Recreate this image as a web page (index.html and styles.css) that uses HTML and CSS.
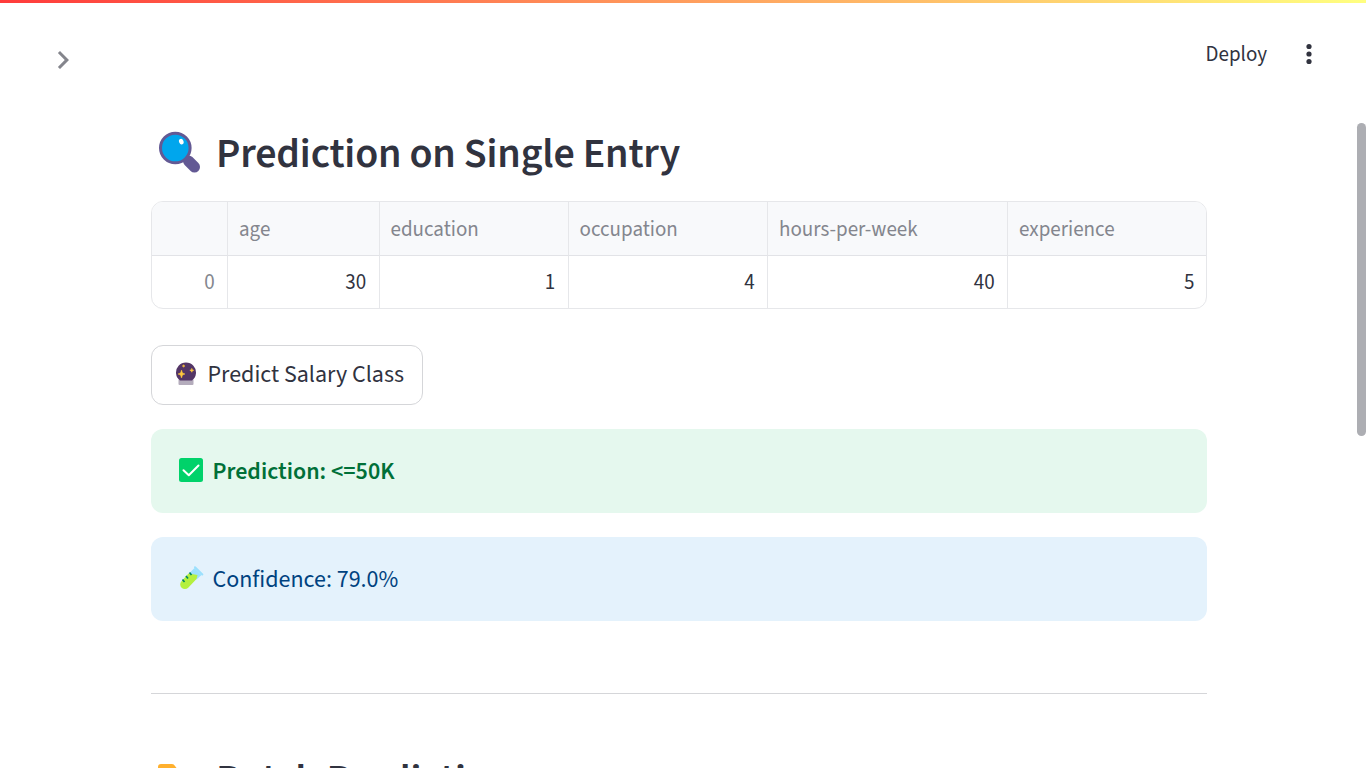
FILE: index.html
```html
<!DOCTYPE html>
<html lang="en">
<head>
<meta charset="utf-8">
<title>Salary Prediction</title>
<link rel="stylesheet" href="styles.css">
</head>
<body>
<div class="decoration"></div>
<header class="toolbar">
  <button class="expand" aria-label="Open sidebar"><svg width="36" height="36" viewBox="0 0 24 24"><path d="M10 6 8.59 7.41 13.17 12l-4.58 4.59L10 18l6-6z"/></svg></button>
  <div class="actions">
    <span class="deploy">Deploy</span>
    <svg class="kebab" width="30" height="30" viewBox="0 0 30 30"><circle cx="15" cy="7.5" r="2.6"/><circle cx="15" cy="15" r="2.6"/><circle cx="15" cy="22.5" r="2.6"/></svg>
  </div>
</header>
<main class="content">
  <h2 class="heading">
    <svg class="heading-icon" width="43" height="43" viewBox="0 0 43 43"><path d="M30.500 30l6 6" stroke="#635994" stroke-width="11" stroke-linecap="round"/><path d="M25 25l5 5" stroke="#635994" stroke-width="4"/><circle cx="17.300" cy="17" r="14.800" fill="#00a6ed" stroke="#635994" stroke-width="3"/><ellipse cx="23.300" cy="10.600" rx="2.200" ry="2.900" fill="#fff" transform="rotate(-22 23.300 10.600)"/></svg>
    <span class="title">Prediction on Single Entry</span>
  </h2>
  <div class="table">
    <div class="cell head"></div><div class="cell head">age</div><div class="cell head">education</div><div class="cell head">occupation</div><div class="cell head">hours-per-week</div><div class="cell head">experience</div>
    <div class="cell num index">0</div><div class="cell num">30</div><div class="cell num">1</div><div class="cell num">4</div><div class="cell num">40</div><div class="cell num">5</div>
  </div>
  <button class="predict">
    <svg width="24" height="24" viewBox="0 0 24 24"><path d="M4.500 17.500h15V22a1 1 0 0 1-1 1h-13a1 1 0 0 1-1-1z" fill="#b4acbc"/><path d="M6 18.600A10 10 0 1 1 18 18.600z" fill="#533566"/><path d="M7.500 8l1 3 2.500 1-2.500 1-1 3-1-3-2.500-1 2.500-1zM17.800 6.300l.6 1.400 1.400.6-1.400.6-.6 1.400-.6-1.400-1.400-.6 1.400-.6zM9.600 2.700l.4.900.9.400-.9.400-.4.900-.4-.9-.9-.4.900-.4z" fill="#ffc83d" stroke="#ffc83d" stroke-width=".5"/></svg>
    <span>Predict Salary Class</span>
  </button>
  <div class="alert success">
    <svg width="25" height="25" viewBox="0 0 25 25"><rect x="0" y="0" width="24" height="24" rx="2.500" fill="#00d26a"/><path d="M4.500 12.300l5.300 5L19.500 7.500" fill="none" stroke="#fff" stroke-width="2" stroke-linecap="round" stroke-linejoin="round"/></svg>
    <strong class="result">Prediction: &lt;=50K</strong>
  </div>
  <div class="alert info">
    <svg width="25" height="25" viewBox="0 0 25 25"><path d="M11 6.500L15.500 2l7 7-5 4.500z" fill="#9be0fd"/><path d="M16 1.200l7.300 7.300" stroke="#9be0fd" stroke-width="2" stroke-linecap="round"/><path d="M9.500 7.500l9 1.500-1 4-8.300 8.700a4.600 4.600 0 0 1-6.700-6.500z" fill="#b4f03f"/><path d="M10.500 6.500l2 2.500M7 10l2 2.500M3.500 13.500l2 2.500" stroke="#008463" stroke-width="1.700"/></svg>
    <span class="confidence">Confidence: 79.0%</span>
  </div>
  <hr class="divider">
  <h2 class="heading batch">
    <svg class="heading-icon" width="43" height="43" viewBox="0 0 43 43"><path d="M0 10a3 3 0 0 1 3-3h11a4 4 0 0 1 3 2l3 4h20v28H0z" fill="#ffb02e"/></svg>
    <span class="title">Batch Prediction</span>
  </h2>
</main>
<div class="scrollbar"></div>
</body>
</html>
```
FILE: styles.css
```css
* { box-sizing: border-box; }
body {
  margin: 0;
  height: 768px;
  overflow: hidden;
  background: #fff;
  color: #31333f;
  font-family: "Source Sans 3", "Source Sans Pro", "Noto Sans CJK SC", sans-serif;
  font-size: 24px;
}
svg { display: block; flex: none; }
button { font: inherit; color: inherit; background: none; border: 0; padding: 0; }
.decoration { height: 3px; background: linear-gradient(90deg, #ff3b3b, #ffff80); }
.toolbar { display: flex; justify-content: space-between; height: 126px; padding: 36px 42px 0 45px; }
.expand { align-self: flex-start; padding-top: 3px; fill: #84858c; }
.actions { display: flex; align-items: center; gap: 27px; height: 30px; font-size: 21px; }
.kebab { fill: #31333f; }
.content { width: 1056px; margin-left: 151px; }
.heading { display: flex; align-items: center; gap: 15.500px; height: 50px; margin: 0 0 22px; padding-left: 6.500px; font-size: 42px; font-weight: 600; line-height: 50px; letter-spacing: -0.005em; white-space: nowrap; }
.heading-icon { margin-bottom: 4px; }
.table { display: grid; grid-template-columns: 76px 151.500px 189px 199.500px 240px 1fr; grid-template-rows: 54px 52px; height: 108px; border: 1px solid #e6e7ea; border-radius: 12px; overflow: hidden; font-size: 21px; }
.cell { display: flex; align-items: center; padding: 0 12.400px 0 11px; border-right: 1px solid #e6e7ea; }
.cell:nth-child(6n) { padding-right: 11.500px; border-right: 0; }
.head { background: #f8f9fb; color: #84868e; border-bottom: 1px solid #e2e3e7; }
.num { justify-content: flex-end; }
.index { color: #84868e; }
.predict { display: flex; align-items: center; gap: 9.500px; width: 272px; height: 60px; margin-top: 36px; padding: 0 0 2px 22px; border: 1px solid #d5d6d9; border-radius: 12px; white-space: nowrap; }
.alert { display: flex; align-items: center; gap: 8.500px; height: 84px; margin-top: 24px; padding-left: 28px; border-radius: 12px; }
.alert svg { margin-bottom: 1px; }
.success { background: #e5f8ee; color: #007038; }
.result { font-weight: 600; }
.info { background: #e4f2fc; color: #004280; }
.divider { height: 1px; margin: 72px 0 61px; border: 0; background: #d5d6d9; }
.batch { margin-bottom: 0; }
.scrollbar { position: absolute; top: 123px; right: 0; width: 9px; height: 313px; border-radius: 5px; background: #adaeb3; }
```
